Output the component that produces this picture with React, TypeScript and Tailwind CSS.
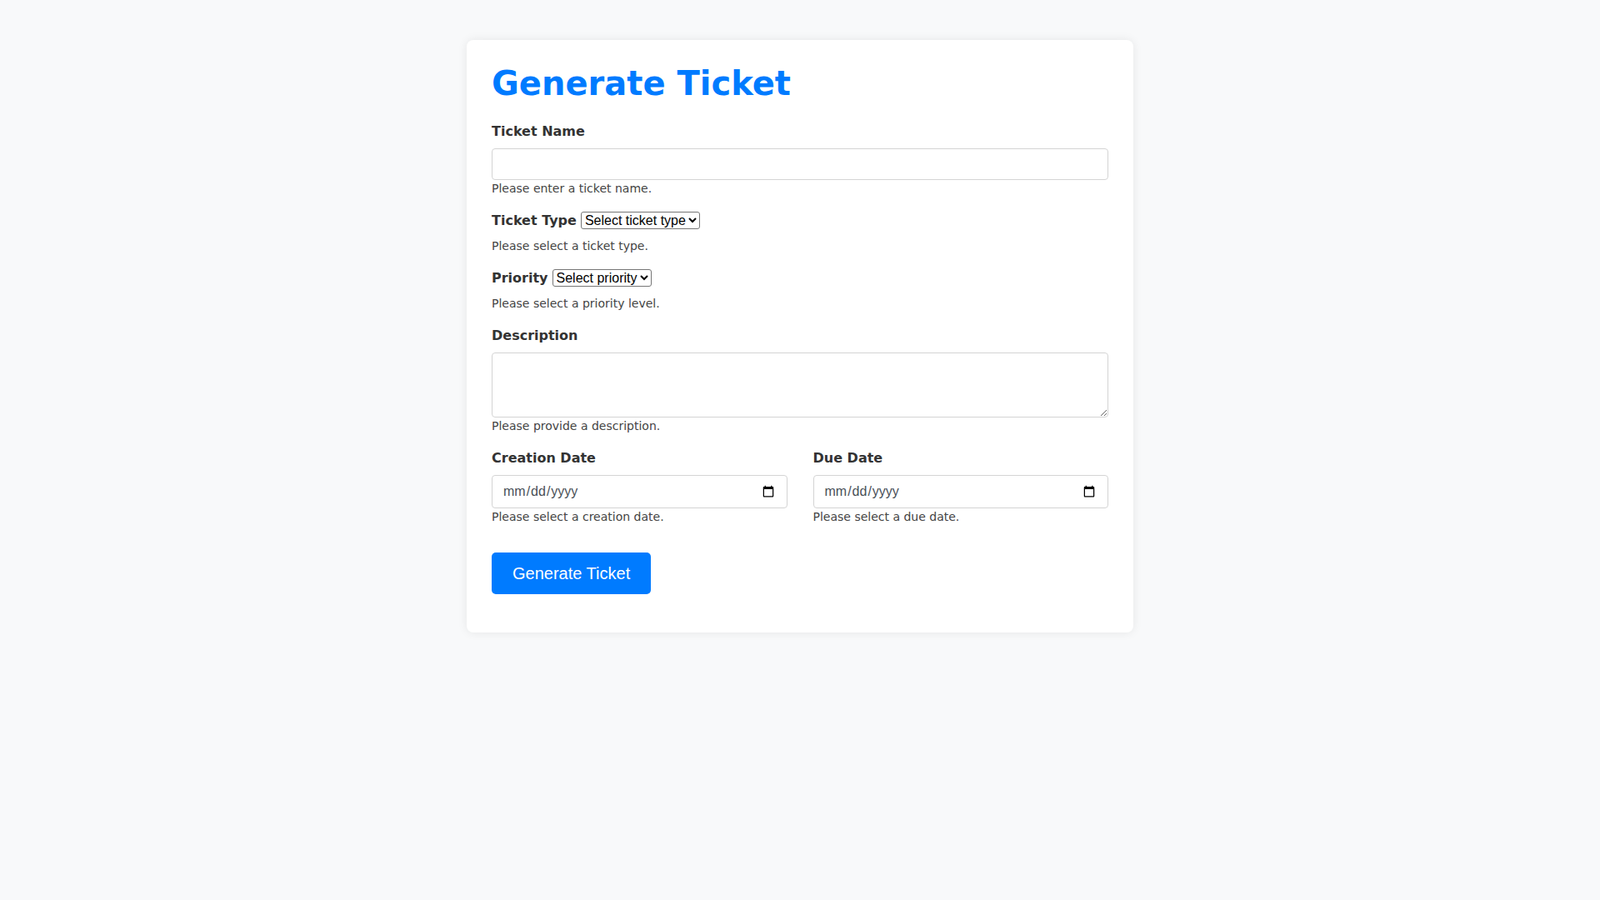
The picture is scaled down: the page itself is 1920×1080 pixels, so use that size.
import React from "react";

export default function App() {
  return (
    <div className="min-h-screen bg-[#f8f9fa] pt-[48px] font-['DejaVu_Sans',sans-serif]">
      <div className="mx-auto w-[800px] rounded-[8px] bg-white px-[30px] pt-[28px] pb-[46px] shadow-[0_0_12px_rgba(0,0,0,0.08)]">
        <h1 className="mb-[22px] text-[40px] font-bold leading-[48px] text-[#007bff]">Generate Ticket</h1>

        <div className="mb-[16px]">
          <label className="mb-[8px] block text-[16px] font-bold leading-[24px] text-[#333]">Ticket Name</label>
          <input
            type="text"
            className="block h-[38px] w-full rounded-[4px] border border-[#d4d4d4] bg-white px-[10px] text-[16px] outline-none"
          />
          <div className="text-[14px] leading-[21px] text-[#444]">Please enter a ticket name.</div>
        </div>

        <div className="mb-[16px]">
          <div className="leading-[24px]">
            <label className="mb-[8px] inline-block text-[16px] font-bold leading-[24px] text-[#333]">Ticket Type</label>
            <select
              defaultValue=""
              className="ml-[5px] appearance-auto rounded-[3px] border border-[#767676] bg-white font-['Liberation_Sans',Arial,sans-serif] text-[16px] leading-normal text-black"
            >
              <option value="">Select ticket type</option>
              <option value="bug">Bug</option>
              <option value="feature">Feature</option>
            </select>
          </div>
          <div className="text-[14px] leading-[21px] text-[#444]">Please select a ticket type.</div>
        </div>

        <div className="mb-[16px]">
          <div className="leading-[24px]">
            <label className="mb-[8px] inline-block text-[16px] font-bold leading-[24px] text-[#333]">Priority</label>
            <select
              defaultValue=""
              className="ml-[5px] appearance-auto rounded-[3px] border border-[#767676] bg-white font-['Liberation_Sans',Arial,sans-serif] text-[16px] leading-normal text-black"
            >
              <option value="">Select priority</option>
              <option value="low">Low</option>
              <option value="high">High</option>
            </select>
          </div>
          <div className="text-[14px] leading-[21px] text-[#444]">Please select a priority level.</div>
        </div>

        <div className="mb-[16px]">
          <label className="mb-[8px] block text-[16px] font-bold leading-[24px] text-[#333]">Description</label>
          <textarea className="block h-[78px] w-full resize-y rounded-[4px] border border-[#d4d4d4] bg-white p-[10px] text-[16px] outline-none" />
          <div className="text-[14px] leading-[21px] text-[#444]">Please provide a description.</div>
        </div>

        <div className="mb-[32px] flex gap-[31px]">
          <div className="flex-1">
            <label className="mb-[8px] block text-[16px] font-bold leading-[24px] text-[#333]">Creation Date</label>
            <input
              type="date"
              className="block h-[40px] w-full rounded-[4px] border border-[#d4d4d4] bg-white px-[12px] font-['Liberation_Sans',Arial,sans-serif] text-[16px] text-[#495057] outline-none"
            />
            <div className="text-[14px] leading-[21px] text-[#444]">Please select a creation date.</div>
          </div>
          <div className="flex-1">
            <label className="mb-[8px] block text-[16px] font-bold leading-[24px] text-[#333]">Due Date</label>
            <input
              type="date"
              className="block h-[40px] w-full rounded-[4px] border border-[#d4d4d4] bg-white px-[12px] font-['Liberation_Sans',Arial,sans-serif] text-[16px] text-[#495057] outline-none"
            />
            <div className="text-[14px] leading-[21px] text-[#444]">Please select a due date.</div>
          </div>
        </div>

        <button
          type="button"
          className="block h-[50px] rounded-[5px] bg-[#007bff] px-[25px] font-['Liberation_Sans',Arial,sans-serif] text-[20px] text-white"
        >
          Generate Ticket
        </button>
      </div>
    </div>
  );
}
